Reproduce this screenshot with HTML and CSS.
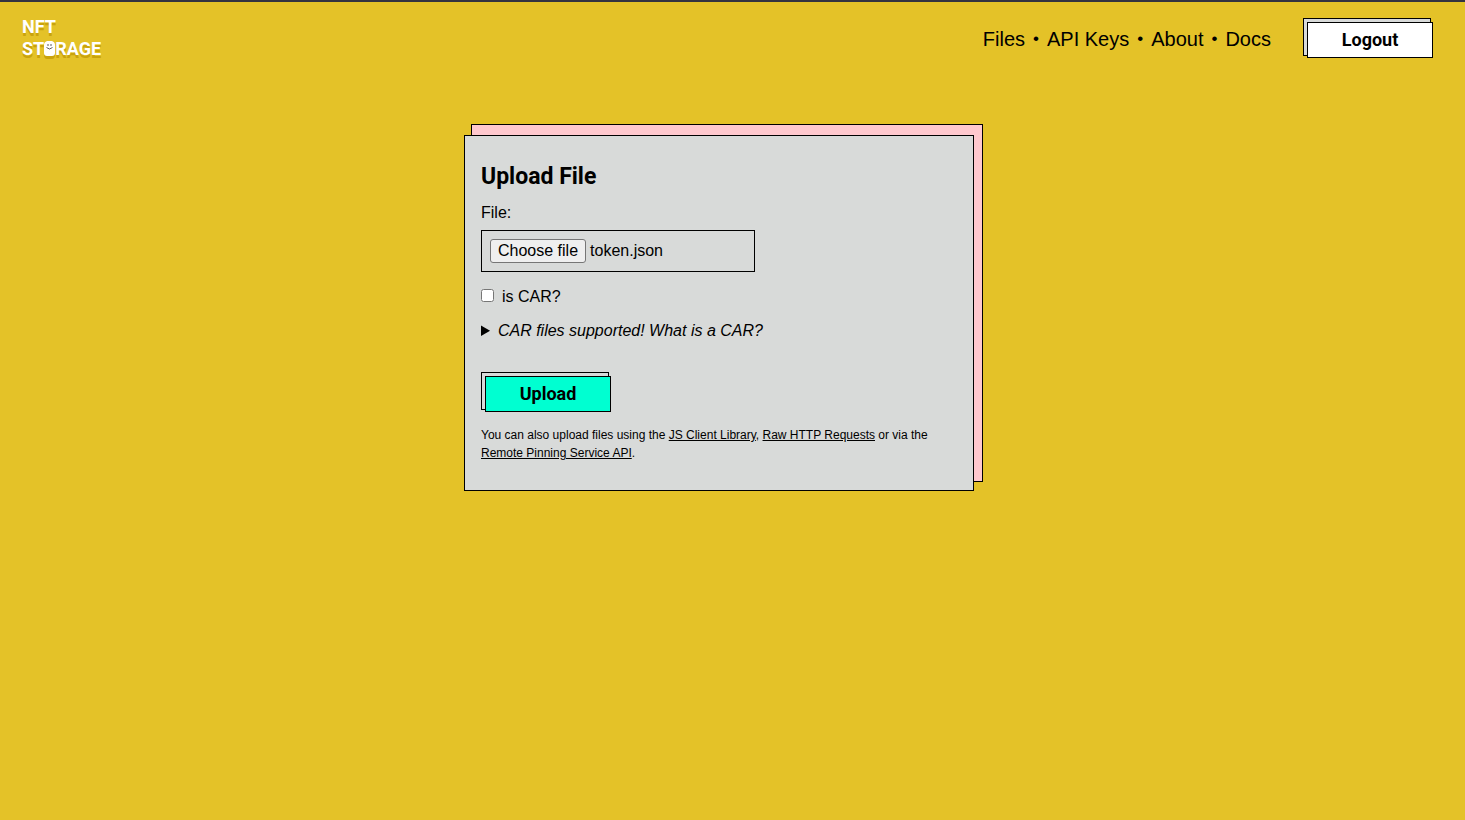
FILE: index.html
```html
<!DOCTYPE html>
<html lang="en">
<head>
<meta charset="utf-8">
<meta name="viewport" content="width=device-width, initial-scale=1">
<title>Upload File - NFT Storage</title>
<link rel="stylesheet" href="styles.css">
</head>
<body>
<header class="header">
  <a class="logo" href="#home" aria-label="NFT Storage">
    <span class="logo-line">NFT</span>
    <span class="logo-line">ST<svg class="logo-face" viewBox="0 0 11 18" aria-hidden="true">
      <path class="face-shadow" d="M0 8h11v6q0 4-3 4H3q-3 0-3-4z"/>
      <path class="face-body" d="M3 0h5q3 1 3 4v8q0 3-3 3H3q-3 0-3-3V4q0-3 3-4z"/>
      <path class="face-eyes" d="M4 3v2M7 3v2"/>
      <path class="face-smile" d="M2.500 6.500q3 3 6 0"/>
    </svg>RAGE</span>
  </a>
  <nav class="nav">
    <a href="#files">Files</a><span class="dot">•</span>
    <a href="#keys">API Keys</a><span class="dot">•</span>
    <a href="#about">About</a><span class="dot">•</span>
    <a href="#docs">Docs</a>
  </nav>
  <div class="button-frame"><button class="button" type="button">Logout</button></div>
</header>
<main class="main">
  <div class="card">
    <form class="card-body">
      <h1 class="title">Upload File</h1>
      <label class="field-label" for="file">File:</label>
      <div class="file-field">
        <span class="file-button">Choose file</span>
        <span>token.json</span>
        <input class="file-input" id="file" type="file">
      </div>
      <div class="check-row">
        <input class="check" id="car" type="checkbox">
        <label for="car">is CAR?</label>
      </div>
      <details class="details">
        <summary><em>CAR files supported! What is a CAR?</em></summary>
      </details>
      <div class="button-frame"><button class="button button-primary" type="submit">Upload</button></div>
      <p class="note">You can also upload files using the <a href="#js">JS Client Library</a>, <a href="#http">Raw HTTP Requests</a> or via the <a href="#pinning">Remote Pinning Service API</a>.</p>
    </form>
  </div>
</main>
</body>
</html>
```
FILE: styles.css
```css
* {
  box-sizing: border-box;
}

body {
  margin: 0;
  min-height: 100vh;
  border-top: 2px solid #333340;
  background: #e4c228;
  color: #000;
  font: 16px/24px "Liberation Sans", Arial, sans-serif;
}

a {
  color: inherit;
}

.header {
  display: flex;
  align-items: flex-start;
  padding: 16px 32px 0 22px;
}

.logo {
  margin: -2px auto 0 0;
  color: #fff;
  font: 700 18px/22px Roboto, sans-serif;
  text-decoration: none;
  text-shadow: 0 3px 0 #c9a30d;
}

.logo-line {
  display: flex;
  align-items: center;
}

.logo-face {
  width: 11px;
  height: 18px;
  margin-top: 2px;
}

.face-shadow {
  fill: #c9a30d;
}

.face-body {
  fill: #fff;
}

.face-eyes,
.face-smile {
  fill: none;
  stroke: #333;
  stroke-width: 0.8;
}

.nav {
  display: flex;
  gap: 8px;
  padding: 9px 32px 0 0;
  font-size: 20px;
}

.nav a {
  text-decoration: none;
}

.dot {
  font-size: 17px;
}

.button-frame {
  position: relative;
  width: 130px;
  padding: 4px 0 0 4px;
}

.button-frame::before {
  content: "";
  position: absolute;
  inset: 0 2px 2px 0;
  border: 1px solid #000;
  background: #d8dad9;
}

.button {
  display: block;
  position: relative;
  width: 100%;
  height: 36px;
  padding: 0;
  border: 1px solid #000;
  background: #fff;
  color: #000;
  font: 700 18px/24px Roboto, sans-serif;
}

.button-primary {
  background: #00ffd1;
}

.main {
  display: flex;
  justify-content: center;
  padding: 75px 27px 32px 0;
}

.card {
  position: relative;
  width: 510px;
}

.card::before {
  content: "";
  position: absolute;
  inset: -11px -9px 9px 7px;
  border: 1px solid #000;
  background: #ffc8ce;
}

.card-body {
  position: relative;
  padding: 28px 16px;
  border: 1px solid #000;
  background: #d8dad9;
}

.title {
  margin: 0 0 11px;
  font: 700 23px/26px Roboto, sans-serif;
}

.field-label {
  display: block;
  margin-bottom: 5px;
}

.file-field {
  display: flex;
  position: relative;
  gap: 4px;
  width: 274px;
  padding: 8px;
  border: 1px solid #000;
}

.file-button {
  padding: 0 7px;
  border: 1px solid #767676;
  border-radius: 3px;
  background: #efefef;
  line-height: 22px;
}

.file-input {
  position: absolute;
  inset: 0;
  width: 100%;
  opacity: 0;
}

.check-row {
  display: flex;
  align-items: center;
  gap: 8px;
  margin: 13px 0 10px;
}

.check {
  width: 13px;
  height: 13px;
  margin: 0 0 3px;
}

.details {
  margin-bottom: 29px;
}

.note {
  margin: 14px 0 0;
  font-size: 12px;
  line-height: 18px;
}
```
